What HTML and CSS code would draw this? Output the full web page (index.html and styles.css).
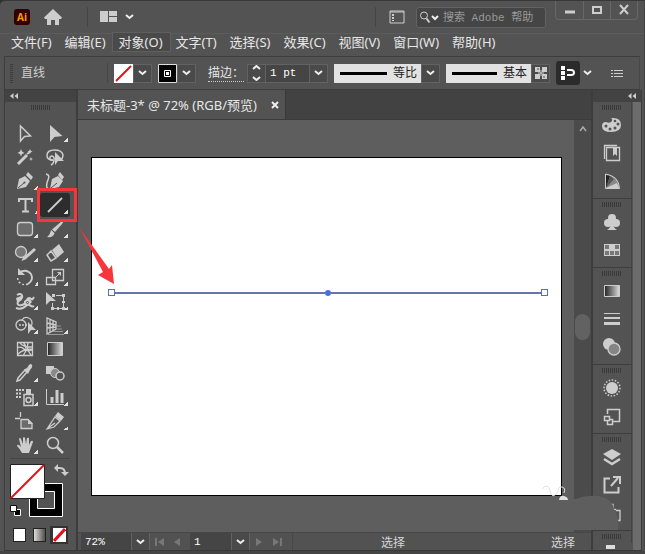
FILE: index.html
```html
<!DOCTYPE html>
<html lang="zh-CN">
<head>
<meta charset="utf-8">
<meta name="viewport" content="width=device-width, initial-scale=1">
<title>未标题-3</title>
<link rel="stylesheet" href="styles.css">
</head>
<body>
<div class="window">
  <header class="titlebar">
    <span class="logo">Ai</span>
    <button class="plain home" aria-label="主页"><svg width="20" height="18" viewBox="0 0 20 18"><path class="f" d="M10 1 19 9.500 18 11H16v6h-4v-5H8v5H4v-6H2L1 9.500Z"/></svg></button>
    <span class="rule"></span>
    <button class="plain layout" aria-label="排列文档"><svg width="34" height="14" viewBox="0 0 34 14"><path class="f" d="M0 1h8v11H0zM9 1h8v5H9zM9 7h8v5H9z"/><path class="chev" d="m26 5 3.500 3L33 5"/></svg></button>
    <span class="rule rule-end"></span>
    <button class="plain panel" aria-label="工作区"><svg width="17" height="14" viewBox="0 0 17 14"><path d="M1 1h14v12H1zM1 2h14"/><path d="M4 4v7" stroke-width="2" stroke-dasharray="2 1"/></svg></button>
    <label class="search"><svg width="24" height="16" viewBox="0 0 24 16"><circle cx="7" cy="6.500" r="3.500"/><path d="m9.500 9.500 3 4" stroke-width="2"/><path class="chev" d="m15 7 3 3 3-3"/></svg><input type="search" placeholder="搜索 Adobe 帮助" aria-label="搜索"></label>
    <div class="winbtns">
      <button aria-label="最小化"><svg width="12" height="12" viewBox="0 0 12 12"><path d="M1 8h10" stroke-width="3"/></svg></button>
      <button aria-label="最大化"><svg width="12" height="12" viewBox="0 0 12 12"><path d="M2 3h8v6H2z" stroke-width="2"/></svg></button>
      <button aria-label="关闭"><svg width="12" height="12" viewBox="0 0 12 12"><path d="m2 1 8 9m0-9-8 9" stroke-width="2"/></svg></button>
    </div>
  </header>

  <nav class="menu">
    <button>文件(F)</button><button>编辑(E)</button><button class="open">对象(O)</button><button>文字(T)</button><button>选择(S)</button><button>效果(C)</button><button>视图(V)</button><button>窗口(W)</button><button>帮助(H)</button>
  </nav>

  <section class="controls">
    <span class="vgrip"></span>
    <span class="kind">直线</span>
    <span class="rule"></span>
    <div class="combo">
      <button class="swatch" aria-label="填色"><svg width="19" height="19" viewBox="0 0 19 19"><path class="white" d="M0 0h19v19H0z"/><path class="red" d="M2 17 17 2"/></svg></button>
      <button class="drop" aria-label="填色选项"><svg width="9" height="6" viewBox="0 0 9 6"><path class="chev" d="m1 1 3.500 3L8 1"/></svg></button>
    </div>
    <div class="combo">
      <button class="swatch" aria-label="描边颜色"><svg width="19" height="19" viewBox="0 0 19 19"><path class="black" d="M.5.5h18v18H.5z" stroke="#ddd"/><path d="M6.500 6.500h6v6h-6z" stroke="#fff"/><path d="M8 8h3v3H8z" fill="#fff" stroke="none"/></svg></button>
      <button class="drop" aria-label="描边选项"><svg width="9" height="6" viewBox="0 0 9 6"><path class="chev" d="m1 1 3.500 3L8 1"/></svg></button>
    </div>
    <label class="stroke-label" for="weight">描边：</label>
    <div class="combo weight">
      <button class="drop" aria-label="调整粗细"><svg width="9" height="16" viewBox="0 0 9 16"><path class="chev" d="m1 4 3.500-3L8 4M1 12l3.500 3L8 12"/></svg></button>
      <input id="weight" value="1 pt">
      <button class="drop" aria-label="粗细选项"><svg width="9" height="6" viewBox="0 0 9 6"><path class="chev" d="m1 1 3.500 3L8 1"/></svg></button>
    </div>
    <div class="combo profile">
      <button class="line-pick"><span class="bar"></span>等比</button>
      <button class="drop" aria-label="配置文件"><svg width="9" height="6" viewBox="0 0 9 6"><path class="chev" d="m1 1 3.500 3L8 1"/></svg></button>
    </div>
    <div class="combo brush">
      <button class="line-pick"><span class="bar"></span>基本</button>
      <button class="drop" aria-label="画笔定义"><svg width="14" height="14" viewBox="0 0 14 14"><path class="f" d="M1 1h5v5H1zM8 1h5v5H8zM1 8h5v5H1zM8 8h5v5H8z"/><path d="M4 7h6M7 4v6" stroke-width="1"/><path d="M3 3h2M9 11h2" stroke="#555"/></svg></button>
    </div>
    <button class="snap" aria-label="对齐"><svg width="16" height="16" viewBox="0 0 16 16"><path fill="#fff" stroke="none" d="M1 1h4v4H1zM1 6h4v4H1zM1 11h4v4H1z"/><path stroke="#fff" stroke-width="2" d="M7 5h4q3 0 3 2.500T11 10H7"/></svg></button>
    <button class="plain" aria-label="对齐选项"><svg width="9" height="6" viewBox="0 0 9 6"><path class="chev" d="m1 1 3.500 3L8 1"/></svg></button>
    <button class="plain list" aria-label="面板菜单"><svg width="12" height="9" viewBox="0 0 12 9"><path d="M0 1.500h2m1 0h9M0 4.500h2m1 0h9M0 7.500h2m1 0h9"/></svg></button>
  </section>

  <main class="work">
    <aside class="toolbox">
      <button class="collapse" aria-label="折叠"><svg width="8" height="6" viewBox="0 0 8 6"><path class="f" d="M3.500 0v6L0 3zM8 0v6L4.500 3z"/></svg></button>
      <span class="grip"></span>
      <div class="tools">
        <button aria-label="选择"><svg viewBox="0 0 30 24"><path d="M10.500 5v15l4-4.500 6-.5z" stroke-width="1.500"/></svg></button>
        <button class="more" aria-label="直接选择"><svg viewBox="0 0 30 24"><path class="f" d="M10 4v17l4.500-5 8-1z"/></svg></button>

        <button aria-label="魔棒"><svg viewBox="0 0 30 24"><path d="m8 19 9-9" stroke-width="3"/><path d="m17 9 3-2" stroke-width="2"/><path class="f" d="m11 4 1 2.500L14.500 8 12 9l-1 2.500L10 9 7.500 8 10 6.500ZM20 4l.8 1.700 1.700.8-1.700.8L20 9l-.8-1.700-1.700-.8 1.700-.8ZM21 12l.6 1.400L23 14l-1.400.6L21 16l-.6-1.400L19 14l1.400-.6Z"/></svg></button>
        <button aria-label="套索"><svg viewBox="0 0 30 24"><path d="M13 15q-6 0-6-4.500Q7 5 14.500 5t8.500 5q0 3-2 5" stroke-width="1.500"/><path d="M13 15c-4 1-4-4-1-4s3 7-1 9" stroke-width="1.500"/><path class="f" d="m15 7 0 13 3-4h6z"/></svg></button>

        <button class="more" aria-label="钢笔"><svg viewBox="0 0 30 24"><path class="f" d="m7 20 2-10 6-3 5 5-4 6ZM16 6l2-3 5 5-2 3Z"/><path d="m8 19 6-5" stroke="#535353"/><circle cx="14.500" cy="13.500" r="1" fill="#535353" stroke="none"/></svg></button>
        <button aria-label="曲率"><svg viewBox="0 0 30 24"><path class="f" d="m10 20 2-10 6-3 5 5-4 6ZM18 6l2-3 4 5-2 3Z"/><path d="m11 19 6-5" stroke="#535353"/><path d="M6 5c5 1 2 5 1 9s0 6 3 6" stroke-width="1.500"/></svg></button>

        <button class="more" aria-label="文字"><svg viewBox="0 0 30 24"><path d="M9 9V6h13v3M15.500 6v13M12 18.500h7" stroke-width="2"/></svg></button>
        <button class="more active" aria-label="直线段"><svg viewBox="0 0 30 24"><path d="M8 19 22 5" stroke-width="1.800"/></svg></button>

        <button class="more" aria-label="圆角矩形"><svg viewBox="0 0 30 24"><rect x="7.500" y="5.500" width="15" height="13" rx="3" fill="#6c6c6c" stroke-width="1.300"/></svg></button>
        <button class="more" aria-label="画笔"><svg viewBox="0 0 30 24"><path class="f" d="M22 4q2 1 0 3l-7 8-3-2.500ZM11 13l3.500 3q-1 5-7.500 4 3-2 4-7Z"/></svg></button>

        <button class="more" aria-label="Shaper"><svg viewBox="0 0 30 24"><circle cx="11" cy="11" r="5.500" fill="#777" stroke-width="1.300"/><path d="m15 17 10-9" stroke-width="3"/><path class="f" d="m13.500 15 3 3-5 2Z"/></svg></button>
        <button class="more" aria-label="橡皮擦"><svg viewBox="0 0 30 24"><path class="f" d="m12 9 7-6 5 8-7 6Z"/><path d="m11 10-4 4 4 6 5-3Z" stroke-width="1.500"/></svg></button>

        <button class="more" aria-label="旋转"><svg viewBox="0 0 30 24"><path d="M9 8q7-5 12 1 3 6-3 10" stroke-width="1.800"/><path d="M18 19q-5 2-9-2-2-3-1-6" stroke-width="1.500" stroke-dasharray="2 2"/><path class="f" d="M8 3v7h7Z"/></svg></button>
        <button class="more" aria-label="比例缩放"><svg viewBox="0 0 30 24"><path d="M12.500 4.500h11v11h-11zM6.500 12.500h9v7h-9z" stroke-width="1.300"/><path d="m15 13 5-5"/><path class="f" d="M17 7h4v4Z"/></svg></button>

        <button class="more" aria-label="宽度"><svg viewBox="0 0 30 24"><path d="M7 6c5-3 7 2 3 5s-3 6 2 5 4-7 7-7 2 4 5-1" stroke-width="2"/><path d="M6 19c5 2 9-1 11-3s4 3 7 1" stroke-width="2"/><path class="f" d="M6 9l5-2 1 4-5 2ZM14 12l5-3 3 4-4 4-4-1Z"/><circle cx="17.500" cy="13.500" r="1" stroke="#535353"/></svg></button>
        <button class="more" aria-label="自由变换"><svg viewBox="0 0 30 24"><path class="f" d="M6 3v13l4-4h6Z"/><path d="M16 6.500h7M23.500 7v12M12.500 14v5M12 19.500h12"/><path class="f" d="M11 18h3v3h-3zM22 18h3v3h-3zM22 5h3v3h-3zM12 5h3v3h-3zM17 18h2v3h-2zM22 12h3v2h-3z"/></svg></button>

        <button class="more" aria-label="形状生成器"><svg viewBox="0 0 30 24"><circle cx="11" cy="12" r="5" stroke-width="1.300"/><path d="M12 7c3-5 10-2 10 3 0 3-2 5-4 5" stroke-width="1.300"/><path d="M9 12h9" stroke-dasharray="2 1" stroke-width="1.500"/><path class="f" d="M18 9v12l3-4h5Z"/></svg></button>
        <button class="more" aria-label="透视网格"><svg viewBox="0 0 30 24"><path d="M7 5v16l9-5V9ZM7 10l9 2M7 15l9-1M10 6v13M13 8v10" stroke-width="1.300"/><path d="M17 13h4M17 16h5M13 18.500h10M8 21.500h16" stroke="#999"/></svg></button>

        <button aria-label="网格"><svg viewBox="0 0 30 24"><path d="M7.500 5.500h15v13h-15zM7 11q4-2 7 1t8 1M13 5q6 6 0 14M8 17q5-5 14-5M10 6q3 4 12 4M18 6q-2 6 3 12" stroke-width="1.300"/></svg></button>
        <button aria-label="渐变"><svg viewBox="0 0 30 24"><defs><linearGradient id="g"><stop stop-color="#222"/><stop offset="1" stop-color="#ddd"/></linearGradient></defs><path d="M7.500 5.500h15v13h-15z" fill="url(#g)"/></svg></button>

        <button class="more" aria-label="吸管"><svg viewBox="0 0 30 24"><path class="f" d="m15 8 2-1 2-3q2-2 3 0t-2 5l-2 4-4-4Z"/><path d="m15 9-7 8-1 3 3-1 7-8Z" stroke-width="1.500"/></svg></button>
        <button aria-label="混合"><svg viewBox="0 0 30 24"><path class="f" d="M6 5h8v8H6z"/><circle cx="15" cy="12" r="4.500" fill="#888"/><circle cx="20" cy="15" r="4" fill="#535353" stroke-width="1.500"/></svg></button>

        <button class="more" aria-label="符号喷枪"><svg viewBox="0 0 30 24"><path d="M6 5h8M6 8.500h6M6 12h6" stroke-width="2" stroke-dasharray="2 1"/><path d="M14 9.500h9v11h-9z" stroke-width="1.500"/><path class="f" d="M16 4h5v5h-5z"/><circle cx="18.500" cy="15" r="2.500" stroke-width="1.500"/></svg></button>
        <button class="more" aria-label="柱形图"><svg viewBox="0 0 30 24"><path d="M6.500 4v15.500H24"/><path d="M12 18v-6M17 18V5M22 18V8" stroke-width="3"/></svg></button>

        <button aria-label="画板"><svg viewBox="0 0 30 24"><path d="M5 9.500h5M10.500 3v5M11 10.500h7l4 4v5H11z" fill="#6c6c6c" stroke-width="1.300"/><path class="f" d="M18 10v5h5Z"/></svg></button>
        <button class="more" aria-label="切片"><svg viewBox="0 0 30 24"><path d="m7 20 8-12 5 4-6 6Zm1-1 7-5" stroke-width="1.300"/><path class="f" d="m15 7 3-4 6 5-3 4Z"/></svg></button>

        <button class="more" aria-label="抓手"><svg viewBox="0 0 30 24"><path class="f" d="M12 20q-2-4-5-7 0-2 2-1l2 2-2-8q1-2 2 0l2 5V5q1-2 2 0l1 6 1-6q2-1 2 1v6l2-4q2-1 2 1l-3 8-1 3Z"/></svg></button>
        <button aria-label="缩放"><svg viewBox="0 0 30 24"><circle cx="13" cy="10" r="5.500" stroke-width="1.500"/><path d="m17 14 6 6" stroke-width="2.500"/></svg></button>
      </div>
      <button class="paint" aria-label="填色和描边"><svg width="62" height="56" viewBox="0 0 62 56"><path class="black" d="M20.500 20.500h33v33h-33z" stroke="#fff"/><path d="M28.500 28.500h17v17h-17z" fill="#535353" stroke="#fff"/><path d="M1.500 1.500h34v34h-34z" fill="#fff" stroke="#222"/><path class="red" d="M2 35 35 2"/><path d="M48 5h3q5 0 5 6" stroke-width="2"/><path class="f" d="M49 1v8l-4-4zM52 9h8l-4 4z"/><path class="black" d="M5.500 46.500h6v6h-6z" stroke="#fff"/><path d="M1.500 42.500h6v6h-6z" fill="#fff" stroke="#111"/></svg></button>
      <div class="modes">
        <button class="mode" aria-label="颜色"><span class="chip solid"></span></button>
        <button class="mode" aria-label="渐变填充"><span class="chip fade"></span></button>
        <button class="mode on" aria-label="无"><svg width="13" height="14" viewBox="0 0 13 14"><path class="white" d="M0 0h13v14H0z"/><path d="M1 13 12 1" stroke="#e3101a" stroke-width="3"/></svg></button>
      </div>
    </aside>

    <section class="document">
      <div class="tabs"><div class="tab"><span>未标题-3* @ 72% (RGB/预览)</span><button class="plain" aria-label="关闭文档"><svg width="8" height="8" viewBox="0 0 8 8"><path d="m1 1 6 6m0-6L1 7" stroke="#eee" stroke-width="2"/></svg></button></div></div>
      <div class="view">
        <div class="stage">
          <div class="artboard">
            <div class="segment"><span class="handle"></span><span class="half"></span><span class="center"></span><span class="half"></span><span class="handle"></span></div>
            <svg class="swirl" width="26" height="14" viewBox="0 0 26 14"><path d="M1 5q6-7 8 2t8 1q0-6 4-5t2 6" stroke="#e2e2e2"/></svg>
          </div>
        </div>
        <div class="scroll"><svg width="8" height="6" viewBox="0 0 8 6"><path d="m1 5 3-4 3 4" stroke="#aaa" stroke-width="1.500"/></svg><span class="thumb"></span></div>
      </div>
      <footer class="status">
        <input class="zoom" value="72%" aria-label="缩放比例">
        <button class="drop" aria-label="缩放选项"><svg width="9" height="6" viewBox="0 0 9 6"><path class="chev" d="m1 1 3.500 3L8 1"/></svg></button>
        <button class="plain step" aria-label="首页"><svg width="9" height="8" viewBox="0 0 9 8"><path class="dim" d="M0 0h2v8H0zM9 0v8L3 4z"/></svg></button>
        <button class="plain step" aria-label="上一页"><svg width="6" height="8" viewBox="0 0 6 8"><path class="dim" d="M6 0v8L0 4z"/></svg></button>
        <input class="page" value="1" aria-label="画板编号">
        <button class="drop" aria-label="画板选项"><svg width="9" height="6" viewBox="0 0 9 6"><path class="chev" d="m1 1 3.500 3L8 1"/></svg></button>
        <button class="plain step" aria-label="下一页"><svg width="6" height="8" viewBox="0 0 6 8"><path class="dim" d="M0 0v8l6-4z"/></svg></button>
        <button class="plain step" aria-label="末页"><svg width="9" height="8" viewBox="0 0 9 8"><path class="dim" d="M0 0v8l6-4zM7 0h2v8H7z"/></svg></button>
        <span class="info"><span>选择</span><span>选择</span></span>
      </footer>
    </section>

    <aside class="dock">
      <button class="collapse" aria-label="展开"><svg width="8" height="6" viewBox="0 0 8 6"><path class="f" d="M3.500 0v6L0 3zM8 0v6L4.500 3z"/></svg></button>
      <div class="groups">
        <div class="group"><span class="grip"></span>
          <button aria-label="颜色面板"><svg viewBox="0 0 24 24"><path class="f" d="M11 5q2 1 1 3-2 3-6 1-4 0-4 4 0 6 9 6 10 0 10-7 0-8-10-7Z"/><g fill="#535353" stroke="none"><circle cx="6" cy="13" r="1.500"/><circle cx="10" cy="16" r="1.500"/><circle cx="15" cy="15" r="1.500"/><circle cx="18" cy="11" r="1.500"/><circle cx="15" cy="8" r="1.300"/></g></svg></button>
          <button aria-label="颜色库"><svg viewBox="0 0 24 24"><path d="M17 4.500H4.500V18M6.500 6.500h13v13h-13z" stroke-width="1.300"/><path class="f" d="M13 7h4v8l-2-2-2 2z"/></svg></button>
          <button aria-label="颜色参考"><svg viewBox="0 0 24 24"><path d="M5.500 5v14.500h14Q19 7 5.500 5Z" fill="#888"/><path d="M6 19V6l4 1Z" fill="#222" stroke="none"/><path d="M6 19 10 7l4 3Z" fill="#555" stroke="none"/><path class="f" d="m6 19 11-5 2 5Z"/></svg></button>
        </div>
        <div class="group"><span class="grip"></span>
          <button aria-label="符号"><svg viewBox="0 0 24 24"><g class="f"><circle cx="12" cy="8" r="4"/><circle cx="8" cy="13" r="4"/><circle cx="16" cy="13" r="4"/><path d="M11 12h2q0 6 4 8H7q4-2 4-8Z"/></g></svg></button>
          <button aria-label="色板"><svg viewBox="0 0 24 24"><path class="f" d="M4 6h16v12H4z"/><path fill="#777" stroke="none" d="M5 7h4v4H5zM15 7h4v4h-4zM5 13h4v4H5zM10 13h4v4h-4zM15 13h4v4h-4z"/></svg></button>
        </div>
        <div class="group"><span class="grip"></span>
          <button aria-label="渐变面板"><svg viewBox="0 0 24 24"><path d="M4.500 6.500h15v11h-15z" fill="url(#g)"/></svg></button>
          <button aria-label="描边面板"><svg viewBox="0 0 24 24"><path d="M4 6.500h16"/><path d="M4 11h16" stroke-width="2"/><path d="M4 16.500h16" stroke-width="3"/></svg></button>
          <button aria-label="透明度"><svg viewBox="0 0 24 24"><circle class="f" cx="9" cy="9" r="6"/><circle cx="14" cy="14" r="6" fill="#858585" stroke-width="1.300"/></svg></button>
        </div>
        <div class="group"><span class="grip"></span>
          <button aria-label="外观"><svg viewBox="0 0 24 24"><circle class="f" cx="12" cy="12" r="6"/><circle cx="12" cy="12" r="8" stroke-width="1.500" stroke-dasharray="1.500 1.600"/></svg></button>
          <button aria-label="图形样式"><svg viewBox="0 0 24 24"><path d="M7.500 10V5.500h12v12H13M4.500 12.500h5v4h-5zM10 15.500h2.500v5h-5V17" stroke-width="1.500"/></svg></button>
        </div>
        <div class="group"><span class="grip"></span>
          <button aria-label="图层"><svg viewBox="0 0 24 24"><path class="f" d="m12 4 9 5-9 6-9-6Z"/><path d="m4 14 8 5 8-5" stroke-width="2.500"/></svg></button>
          <button aria-label="资源导出"><svg viewBox="0 0 24 24"><path d="M10 5.500H4.500v14h14V14M11 13l7-8M13 4h7v7" stroke-width="2"/></svg></button>
          <button aria-label="画板面板"><svg viewBox="0 0 24 24"><path d="M4 8.500h12M10 3.500h3v4M16 9.500h4v10h-5" stroke-width="1.300"/></svg></button>
        </div>
        <div class="group tail"><span class="grip"></span></div>
      </div>
      <svg class="cloud" width="98" height="56" viewBox="0 0 98 56"><path d="M0 35V4h55q10-4 22-3 14 2 16 13 6 9 4 21Z" fill="#5e5e5e" stroke="none"/><path d="M38 5q1-5 5-4t4 4Z" fill="#ddd" stroke="none"/><path d="M85 50h9v4h-9z" fill="#ddd" stroke="none"/></svg>
    </aside>
    <svg class="arrow" width="38" height="60" viewBox="0 0 38 60"><path d="M1 1 31 43l3-4 2 19-16-9 5-3Z" fill="#f5363a" stroke="none"/></svg>
  </main>
</div>
</body>
</html>
```
FILE: styles.css
```css
* { box-sizing: border-box; }

html, body { height: 100%; }

body {
  margin: 0;
  background: #2c3036;
  color: #e6e6e6;
  font: 13px/18px "Noto Sans", "Noto Sans CJK SC", sans-serif;
}

button, input { font: inherit; color: inherit; margin: 0; border: 0; }
button { background: none; padding: 0; display: flex; align-items: center; justify-content: center; flex: none; }
input { background: #454545; min-width: 0; border-radius: 0; outline: 0; }

svg { display: block; flex: none; fill: none; stroke: #cdcdcd; }
.f { fill: #cdcdcd; stroke: none; }
.chev { stroke: #eee; stroke-width: 2; }
.white { fill: #fff; stroke: none; }
.black { fill: #000; }
.red { stroke: #e3101a; stroke-width: 2; }
.dim { fill: #777; stroke: none; }

.window {
  min-height: 100vh;
  display: flex;
  flex-direction: column;
  background: #535353;
  border-top: 1px solid #383838;
  border-right: 1px solid #444;
  border-bottom: 3px solid #444;
  border-radius: 5px 0 0 0;
}

.rule { width: 1px; height: 20px; background: #464646; flex: none; }

.titlebar { display: flex; align-items: center; height: 32px; padding: 0 6px 0 14px; }
.logo {
  width: 16px; height: 16px;
  border-radius: 3px;
  background: #330000;
  color: #ff9a00;
  font: bold 10px/16px "Open Sans", sans-serif;
  text-align: center;
}
.home { margin: 0 24px 0 13px; }
.layout { margin-left: 12px; }
.rule-end { margin-left: auto; }
.panel { margin: 0 10px 0 13px; }
.search {
  display: flex; align-items: center;
  width: 130px; height: 21px;
  border: 1px solid #626262;
  border-radius: 3px;
  background: #454545;
}
.search input { flex: 1; width: 0; padding: 0 0 0 2px; font-size: 11px; background: none; appearance: none; }
.search input::placeholder { color: #999; font-family: "Liberation Mono", "Noto Sans CJK SC", monospace; }
.winbtns {
  display: flex;
  align-self: flex-start;
  margin-left: 9px;
  height: 19px;
  border: 1px solid #686868;
  border-top: 0;
  border-radius: 0 0 4px 4px;
}
.winbtns button { width: 27px; }
.winbtns button + button { border-left: 1px solid #686868; }

.menu { display: flex; align-items: center; height: 23px; padding: 0 4px 6px 5px; border-top: 1px solid #5c5c5c; }
.menu button { height: 18px; padding: 0 7px 0 6px; white-space: nowrap; }
.menu .open { background: #4a4a4a; outline: 1px solid #5f5f5f; }

.controls {
  display: flex; align-items: center;
  height: 34px;
  margin: 0 4px;
  padding: 0 16px 0 5px;
  border: 1px solid #3d3d3d;
  border-right-color: #484848;
}
.vgrip { width: 3px; height: 19px; margin-right: 8px; background: repeating-linear-gradient(#3c3c3c 0 1px, transparent 1px 2px); }
.kind { color: #cfcfcf; width: 86px; font-size: 12px; }
.combo { display: flex; height: 19px; margin-left: 6px; }
.drop { width: 19px; background: #4a4a4a; border: 1px solid #626262; }
.stroke-label { margin-left: 12px; font-size: 12px; border-bottom: 1px dotted #ccc; line-height: 16px; white-space: nowrap; }
.weight { margin-left: 3px; }
.weight input { width: 43px; padding: 0 4px; font-family: "Liberation Mono", monospace; font-size: 11px; color: #fff; border: solid #626262; border-width: 1px 0; }
.profile { flex: 107 1 0; }
.brush { flex: 105 1 0; }
.line-pick { flex: 1; gap: 6px; padding: 0 4px 0 6px; background: #e2e2e2; color: #222; font-size: 12px; }
.bar { flex: 1; height: 3px; background: #000; }
.snap { width: 24px; height: 24px; margin: 0 3px 0 6px; background: #2b2b2b; border-radius: 3px; }
.list { margin-left: 19px; }

.work { position: relative; flex: 1; display: flex; min-height: 0; margin: 0 2px 0 4px; border-bottom: 1px solid #383838; }

.collapse { width: 100%; height: 12px; background: #434343; justify-content: flex-start; padding-left: 5px; }
.grip { display: block; width: 20px; height: 5px; margin: 3px auto 0; background: repeating-linear-gradient(90deg, #3a3a3a 0 1px, transparent 1px 2px); }

.toolbox { display: flex; flex-direction: column; width: 74px; flex: none; border: solid #3d3d3d; border-width: 0 2px 0 1px; }
.tools {
  display: grid;
  grid-template-columns: 30px 30px;
  grid-auto-rows: 24px;
  margin: 11px 6px 0 5px;
  padding-bottom: 1px;
  border-bottom: 1px solid #464646;
}
.tools button { position: relative; }
.tools svg { width: 30px; height: 24px; }
.more::after {
  content: "";
  position: absolute; right: 2px; bottom: 3px;
  width: 4px; height: 4px;
  background: linear-gradient(135deg, transparent 50%, #e0e0e0 50%);
}
.tools .active { background: #2d2d2d; border-radius: 3px; z-index: 1; }
.active::before { content: ""; position: absolute; inset: -5px -7px -5px -3px; border: 3px solid #f5363a; }
.paint { margin: 4px auto 0 4px; }
.modes { display: flex; gap: 2px; padding: 7px 0 0 5px; }
.mode { width: 18px; height: 18px; }
.mode.on { background: #333; }
.chip { width: 13px; height: 14px; border: 1px solid #222; }
.solid { background: #fff; }
.fade { background: linear-gradient(90deg, #ddd, #554c4c); }

.document { flex: 1; min-width: 0; display: flex; flex-direction: column; }
.tabs { display: flex; height: 30px; background: #424242; border-bottom: 1px solid #3b3b3b; }
.tab { display: flex; align-items: center; gap: 14px; padding: 0 6px 0 9px; background: #535353; border-right: 1px solid #383838; white-space: nowrap; }
.view { flex: 1; display: flex; min-height: 0; }
.stage { flex: 1; display: flex; padding: 37px 12px 36px 13px; background: #5e5e5e; }
.artboard { position: relative; flex: 1; background: #fff; border: 1px solid #000; }
.segment { position: absolute; top: 39%; left: 16px; right: 13px; display: flex; align-items: center; }
.handle { width: 7px; height: 7px; border: 1px solid #5c70b8; background: #fff; }
.half { flex: 1; height: 2px; background: #6675ae; }
.center { width: 6px; height: 6px; border-radius: 50%; background: #4a6fe0; }
.swirl { position: absolute; right: -6px; bottom: -3px; }
.scroll { width: 17px; display: flex; flex-direction: column; align-items: center; padding-top: 6px; background: #4b4b4b; }
.thumb { width: 15px; height: 26px; margin-top: 182px; border-radius: 8px; background: #626262; }

.status { display: flex; align-items: stretch; height: 18px; background: #525252; border-top: 1px solid #474747; }
.status input { padding: 0 4px; font-family: "Liberation Mono", monospace; font-size: 11px; color: #fff; }
.status .drop { border-width: 0 1px; }
.zoom { width: 50px; margin-left: 3px; }
.page { width: 41px; margin-left: 4px; }
.step { width: 18px; }
.info { flex: 1; display: flex; justify-content: flex-end; gap: 146px; padding-right: 16px; border-left: 1px solid #484848; margin-left: 6px; font-size: 12px; line-height: 20px; color: #d5d5d5; white-space: nowrap; }

.dock { position: relative; width: 51px; flex: none; display: flex; flex-direction: column; border: solid #3d3d3d; border-width: 0 1px 0 2px; }
.dock .collapse { padding-left: 35px; }
.groups { flex: 1; padding-right: 9px; background: linear-gradient(#6c6c6c, #6c6c6c) right / 8px 100% no-repeat; }
.group { background: #535353; border-bottom: 1px solid #3d3d3d; border-right: 1px solid #444; padding: 1px 0 3px; }
.group .grip { margin-top: 2px; margin-bottom: 1px; }
.group button { width: 100%; height: 28px; }
.group svg { width: 24px; height: 24px; }
.tail { border-bottom: 0; }
.cloud { position: absolute; right: 22px; bottom: -1px; }

.arrow { position: absolute; left: 74px; top: 136px; }
```
